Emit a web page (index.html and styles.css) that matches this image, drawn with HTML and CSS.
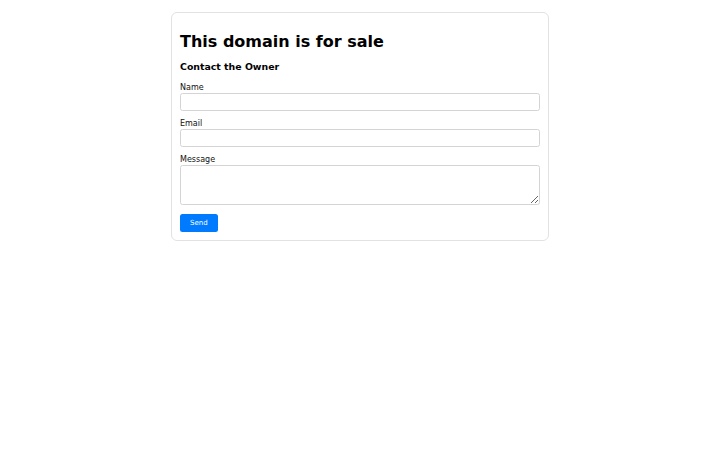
FILE: index.html
```html
<!DOCTYPE html>
<html lang="en">
<head>
<meta charset="utf-8">
<title>This domain is for sale</title>
<link rel="stylesheet" href="styles.css">
</head>
<body>
<main class="card">
  <h1 class="title">This domain is for sale</h1>
  <h3 class="subtitle">Contact the Owner</h3>
  <form class="form">
    <label class="label" for="name">Name</label>
    <input class="field" id="name" type="text">
    <label class="label" for="email">Email</label>
    <input class="field" id="email" type="email">
    <label class="label" for="message">Message</label>
    <textarea class="field area" id="message"></textarea>
    <button class="send" type="button">Send</button>
  </form>
</main>
</body>
</html>
```

FILE: styles.css
```css
html, body {
  margin: 0;
  padding: 0;
  background: #ffffff;
}
body {
  font-family: "DejaVu Sans", sans-serif;
  font-size: 8px;
  color: #000000;
  padding-top: 12px;
}
.card {
  box-sizing: border-box;
  width: 378px;
  margin: 0 auto;
  padding: 8px;
  border: 1px solid #e2e2e2;
  border-radius: 6px;
}
.title {
  font-size: 16px;
  font-weight: bold;
  margin: 10.7px 0;
}
.subtitle {
  font-size: 9.4px;
  font-weight: bold;
  margin: 10.7px 0 10.2px;
}
.form {
  display: flex;
  flex-direction: column;
}
.label {
  display: block;
  font-size: 8px;
  line-height: 9.3px;
  margin-bottom: 1.5px;
  color: #111111;
}
.field {
  box-sizing: border-box;
  display: block;
  width: 100%;
  height: 17.2px;
  margin: 0 0 8px;
  padding: 2px 4px;
  border: 1px solid #d4d4d4;
  border-radius: 2.5px;
  font-family: "DejaVu Sans", sans-serif;
  font-size: 8px;
  background: #ffffff;
}
.area {
  height: 40px;
  margin-bottom: 9px;
  resize: vertical;
}
.send {
  align-self: flex-start;
  font-family: "DejaVu Sans", sans-serif;
  font-size: 7px;
  line-height: 8px;
  padding: 5px 10px;
  border: 0;
  border-radius: 2.5px;
  background: #007bff;
  color: #ffffff;
}
```
